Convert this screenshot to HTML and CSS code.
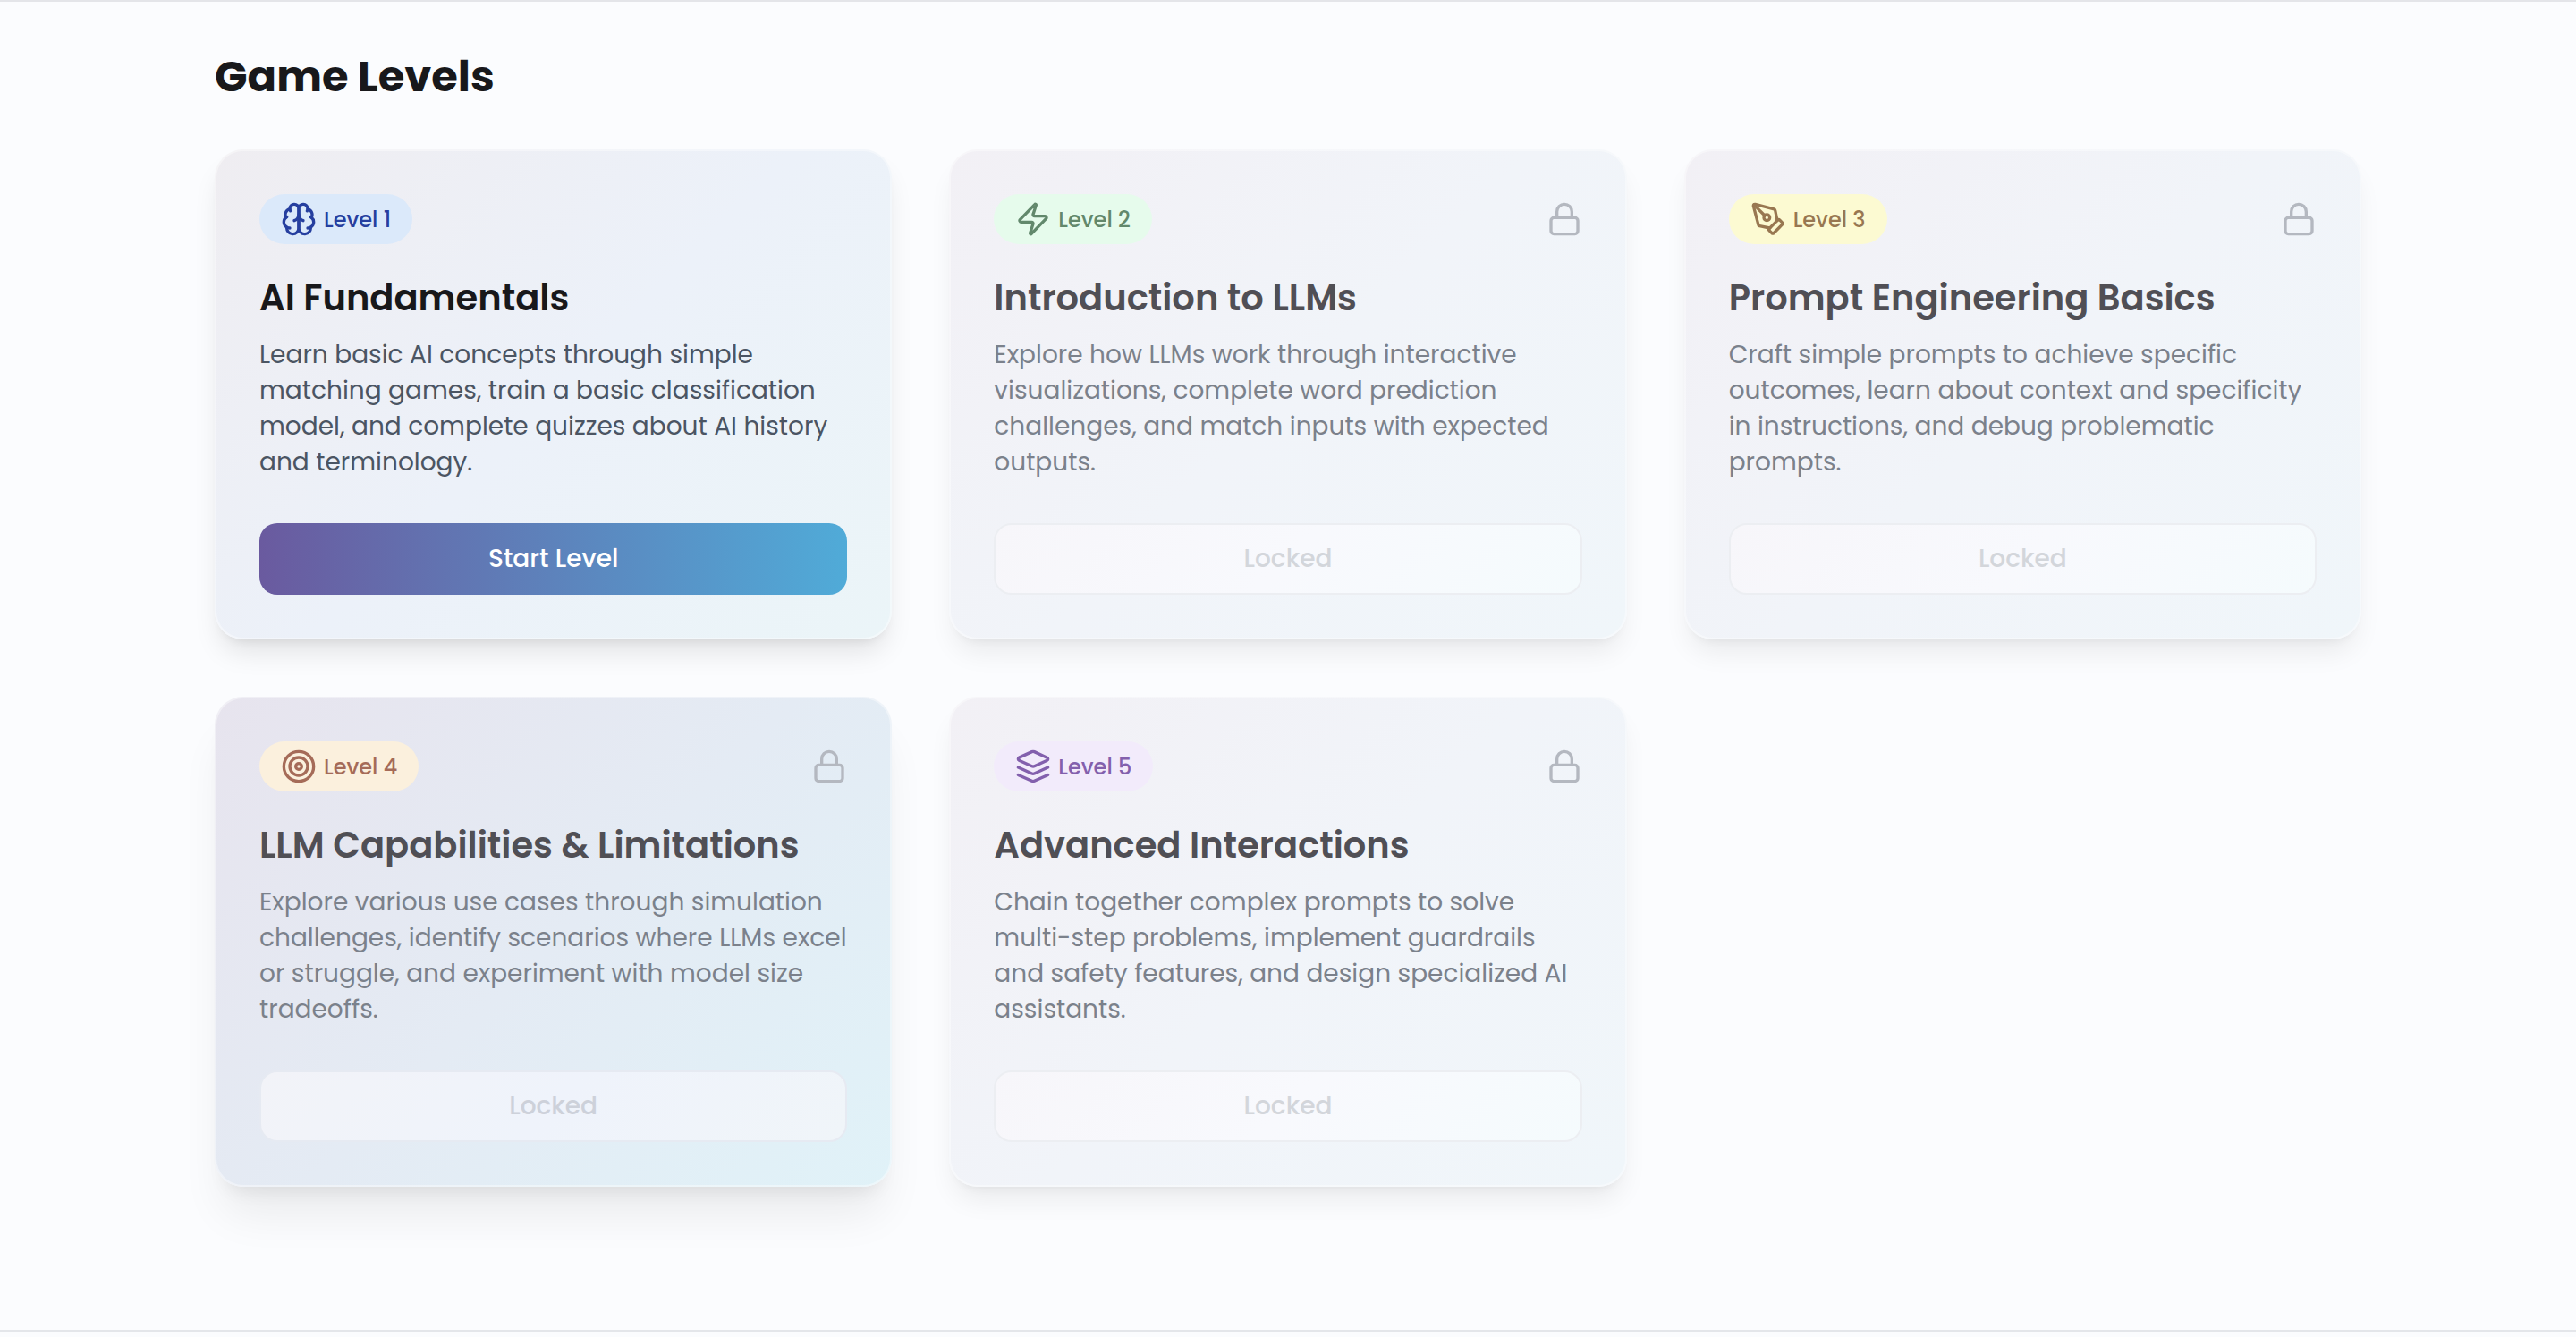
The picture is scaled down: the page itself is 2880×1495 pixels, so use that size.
FILE: index.html
```html
<!DOCTYPE html>
<html lang="en">
<head>
    <meta charset="UTF-8">
    <title>Game Levels</title>
    <link rel="stylesheet" href="styles.css">
</head>
<body>
    <!-- shared icons -->
    <svg class="sprite" aria-hidden="true">
        <symbol id="icon-lock" viewBox="0 0 24 24">
            <rect width="18" height="11" x="3" y="11" rx="2" ry="2"/>
            <path d="M7 11V7a5 5 0 0 1 10 0v4"/>
        </symbol>
    </svg>

    <main class="levels">
        <h2 class="levels-title">Game Levels</h2>
        <div class="level-grid">

            <article class="card active">
                <div class="card-top">
                    <span class="badge blue">
                        <svg class="icon" viewBox="0 0 24 24">
                            <path d="M12 5a3 3 0 1 0-5.997.125 4 4 0 0 0-2.526 5.77 4 4 0 0 0 .556 6.588A4 4 0 1 0 12 18Z"/>
                            <path d="M12 5a3 3 0 1 1 5.997.125 4 4 0 0 1 2.526 5.77 4 4 0 0 1-.556 6.588A4 4 0 1 1 12 18Z"/>
                            <path d="M15 13a4.5 4.5 0 0 1-3-4 4.5 4.5 0 0 1-3 4"/>
                            <path d="M17.599 6.5a3 3 0 0 0 .399-1.375"/>
                            <path d="M6.003 5.125A3 3 0 0 0 6.401 6.5"/>
                            <path d="M3.477 10.896a4 4 0 0 1 .585-.396"/>
                            <path d="M19.938 10.5a4 4 0 0 1 .585.396"/>
                            <path d="M6 18a4 4 0 0 1-1.967-.516"/>
                            <path d="M19.967 17.484A4 4 0 0 1 18 18"/>
                        </svg>
                        Level 1
                    </span>
                </div>
                <h3 class="card-title">AI Fundamentals</h3>
                <p class="card-text">Learn basic AI concepts through simple matching games, train a basic classification model, and complete quizzes about AI history and terminology.</p>
                <button class="btn start" type="button">Start Level</button>
            </article>

            <article class="card">
                <div class="card-top">
                    <span class="badge green">
                        <svg class="icon" viewBox="0 0 24 24">
                            <path d="M4 14a1 1 0 0 1-.78-1.63l9.9-10.2a.5.5 0 0 1 .86.46l-1.92 6.02A1 1 0 0 0 13 10h7a1 1 0 0 1 .78 1.63l-9.9 10.2a.5.5 0 0 1-.86-.46l1.92-6.02A1 1 0 0 0 11 14z"/>
                        </svg>
                        Level 2
                    </span>
                    <svg class="icon lock"><use href="#icon-lock"/></svg>
                </div>
                <h3 class="card-title">Introduction to LLMs</h3>
                <p class="card-text">Explore how LLMs work through interactive visualizations, complete word prediction challenges, and match inputs with expected outputs.</p>
                <button class="btn" type="button" disabled>Locked</button>
            </article>

            <article class="card">
                <div class="card-top">
                    <span class="badge yellow">
                        <svg class="icon" viewBox="0 0 24 24">
                            <path d="M15.707 21.293a1 1 0 0 1-1.414 0l-1.586-1.586a1 1 0 0 1 0-1.414l5.586-5.586a1 1 0 0 1 1.414 0l1.586 1.586a1 1 0 0 1 0 1.414z"/>
                            <path d="m18 13-1.375-6.874a1 1 0 0 0-.746-.776L3.235 2.028a1 1 0 0 0-1.207 1.207L5.35 15.879a1 1 0 0 0 .776.746L13 18"/>
                            <path d="m2.3 2.3 7.286 7.286"/>
                            <circle cx="11" cy="11" r="2"/>
                        </svg>
                        Level 3
                    </span>
                    <svg class="icon lock"><use href="#icon-lock"/></svg>
                </div>
                <h3 class="card-title">Prompt Engineering Basics</h3>
                <p class="card-text">Craft simple prompts to achieve specific outcomes, learn about context and specificity in instructions, and debug problematic prompts.</p>
                <button class="btn" type="button" disabled>Locked</button>
            </article>

            <article class="card raised">
                <div class="card-top">
                    <span class="badge orange">
                        <svg class="icon" viewBox="0 0 24 24">
                            <circle cx="12" cy="12" r="10"/>
                            <circle cx="12" cy="12" r="6"/>
                            <circle cx="12" cy="12" r="2"/>
                        </svg>
                        Level 4
                    </span>
                    <svg class="icon lock"><use href="#icon-lock"/></svg>
                </div>
                <h3 class="card-title">LLM Capabilities &amp; Limitations</h3>
                <p class="card-text">Explore various use cases through simulation challenges, identify scenarios where LLMs excel or struggle, and experiment with model size tradeoffs.</p>
                <button class="btn" type="button" disabled>Locked</button>
            </article>

            <article class="card">
                <div class="card-top">
                    <span class="badge purple">
                        <svg class="icon" viewBox="0 0 24 24">
                            <path d="m12.83 2.18a2 2 0 0 0-1.66 0L2.6 6.08a1 1 0 0 0 0 1.83l8.58 3.91a2 2 0 0 0 1.66 0l8.58-3.9a1 1 0 0 0 0-1.83Z"/>
                            <path d="m22 17.65-9.17 4.16a2 2 0 0 1-1.66 0L2 17.65"/>
                            <path d="m22 12.65-9.17 4.16a2 2 0 0 1-1.66 0L2 12.65"/>
                        </svg>
                        Level 5
                    </span>
                    <svg class="icon lock"><use href="#icon-lock"/></svg>
                </div>
                <h3 class="card-title">Advanced Interactions</h3>
                <p class="card-text">Chain together complex prompts to solve multi-step problems, implement guardrails and safety features, and design specialized AI assistants.</p>
                <button class="btn" type="button" disabled>Locked</button>
            </article>

        </div>
    </main>
    <footer class="footer"></footer>
</body>
</html>
```

FILE: styles.css
```css
* {
    box-sizing: border-box;
}

body {
    margin: 0;
    background-color: #fbfcfe;
    color: #18181b;
    font-family: Poppins, Inter, sans-serif;
}

.sprite {
    display: none;
}

.levels {
    border-top: 2px solid #e4e5e9;
    padding: 53px 240px 160px;
}

.levels-title {
    margin: 0 0 50px;
    font-size: 48px;
    line-height: 62px;
    font-weight: 700;
}

.level-grid {
    display: grid;
    grid-template-columns: repeat(3, 1fr);
    gap: 64px;
}

.card {
    display: flex;
    flex-direction: column;
    padding: 48px;
    border: 2px solid rgba(255, 255, 255, 0.4);
    border-radius: 32px;
    background: linear-gradient(135deg, #f2f0f5, #f1f4f9 50%, #f0f6fa) border-box;
    box-shadow: 0 20px 30px -6px rgba(0, 0, 0, 0.07), 0 8px 12px -8px rgba(0, 0, 0, 0.07);
}

.card.active {
    background: linear-gradient(135deg, #efedf1, #ecf1f9 50%, #ebf5f8) border-box;
    box-shadow: 0 20px 30px -6px rgba(0, 0, 0, 0.1), 0 8px 12px -8px rgba(0, 0, 0, 0.1);
}

.card.raised {
    background: linear-gradient(135deg, #e7e4ee, #e4ebf4 50%, #e0f2f8) border-box;
    box-shadow: 0 40px 50px -10px rgba(0, 0, 0, 0.07), 0 16px 20px -12px rgba(0, 0, 0, 0.08);
}

.card-top {
    display: flex;
    justify-content: space-between;
    align-items: center;
    margin-bottom: 32px;
}

.badge {
    display: flex;
    align-items: center;
    gap: 8px;
    height: 56px;
    padding: 0 24px;
    border-radius: 28px;
    font-size: 24px;
    font-weight: 500;
}

.blue {
    background-color: #dbe9fa;
    color: #263f9f;
}

.green {
    background-color: #e6fbec;
    color: #62886c;
}

.yellow {
    background-color: #fcfad2;
    color: #987751;
}

.orange {
    background-color: #fbf0dd;
    color: #a56b58;
}

.purple {
    background-color: #f2ebfb;
    color: #8360ad;
}

.icon {
    width: 40px;
    height: 40px;
    fill: none;
    stroke: currentColor;
    stroke-width: 2;
    stroke-linecap: round;
    stroke-linejoin: round;
}

.lock {
    color: #b4b8c0;
}

.card-title {
    margin: 0 0 16px;
    color: #504f55;
    font-size: 40px;
    line-height: 56px;
    font-weight: 600;
}

.card-text {
    margin: 0 0 48px;
    color: #7b818b;
    font-size: 28px;
    line-height: 40px;
}

.active .card-title {
    color: #18181b;
}

.active .card-text {
    color: #4b5563;
}

.btn {
    height: 80px;
    border: 2px solid #eceef2;
    border-radius: 20px;
    background: linear-gradient(135deg, #f7f6fa, #f8f9fd 50%, #f5fbfd);
    color: #d3d6db;
    font-family: inherit;
    font-size: 28px;
    font-weight: 500;
}

.raised .btn {
    border-color: #e6eaf2;
    background: linear-gradient(135deg, #f2f3f8, #eff3fb 50%, #f0f5f9);
    color: #cdd1da;
}

.start {
    border: 0;
    background: linear-gradient(90deg, #6a5a9f, #50abd8);
    color: #fff;
}

.footer {
    border-top: 2px solid #e4e6ea;
}
```
